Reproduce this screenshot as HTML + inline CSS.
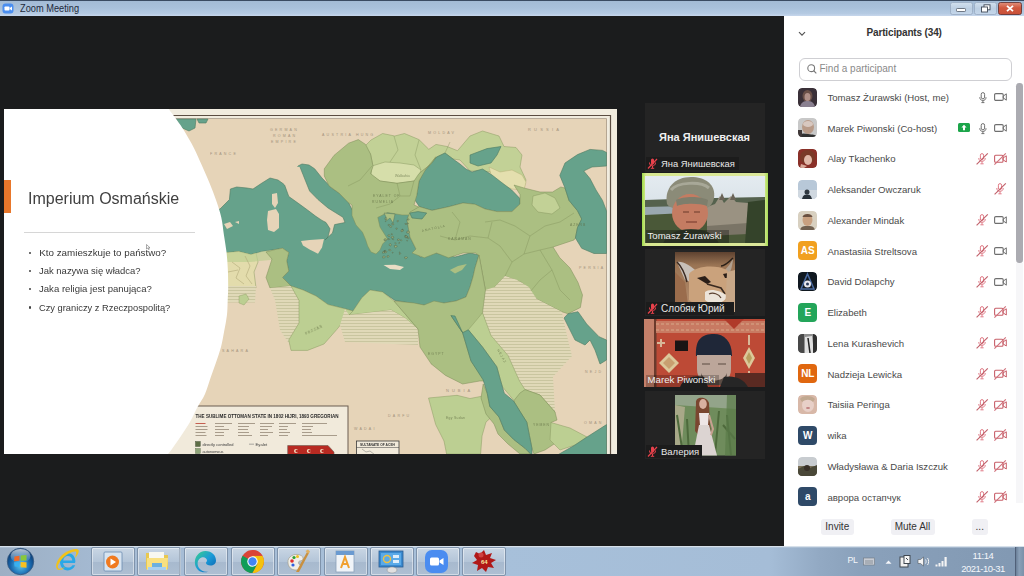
<!DOCTYPE html>
<html><head><meta charset="utf-8"><title>Zoom Meeting</title>
<style>
*{margin:0;padding:0;box-sizing:border-box}
html,body{width:1024px;height:576px;overflow:hidden;background:#1b1c1d;font-family:"Liberation Sans",sans-serif;position:relative}
.a{position:absolute}
#tb{left:0;top:0;width:1024px;height:16px;background:linear-gradient(#3a4b62 0,#3a4b62 1px,#a3bbd5 1px,#a9c1db 8px,#b6cbe3 14px,#c3d4ea 15px,#c3d4ea 16px)}
#tt{left:19.5px;top:2px;font-size:11px;color:#1e2a3a;line-height:13px;transform:scaleX(.84);transform-origin:0 0}
#main{left:0;top:16px;width:784px;height:530px;background:#1b1c1d}
#panel{left:784px;top:16px;width:240px;height:530px;background:#fff}
#task{left:0;top:546px;width:1024px;height:30px;background:linear-gradient(90deg,#9cafc4 0,#a6bcd5 120px,#a7c0da 500px,#a5bdd7 770px,#92a9c3 820px,#8aa1bb 860px,#8299b3 1010px)}
.bl{left:39.3px;font-size:9.8px;color:#383838;line-height:12px;white-space:nowrap}
.bl::before{content:"";position:absolute;left:-10.8px;top:4.6px;width:2.8px;height:2.8px;border-radius:50%;background:#404040}
.lab{height:13.5px;background:#1c1c1c}
.lab span{position:absolute;top:1px;font-size:10px;color:#e8e8e8;line-height:12px;white-space:nowrap}
.vt{font-size:10px;color:#f0f0f0;line-height:12px;white-space:nowrap}
.row{left:784px;width:240px;height:0}
.av{left:14.3px;top:-9.5px;width:19px;height:19px;border-radius:4px}
.ini{color:#fff;font-size:10px;font-weight:bold;text-align:center;line-height:19px}
.nm{left:43.4px;top:-5.2px;font-size:9.6px;color:#4a4a4a;line-height:12px;white-space:nowrap}
.btn{top:519px;height:15.5px;border-radius:3px;background:#f0f0f4;font-size:10px;color:#333;text-align:center;line-height:15px}
.tbtn{top:547px;width:44px;height:28.5px;border:1px solid #7f93ab;border-radius:2px;background:linear-gradient(#c9d6e4,#b4c5d8 50%,#a7b9ce 51%,#aebfd2);box-shadow:inset 0 0 0 1px rgba(255,255,255,.45)}
</style></head><body>
<div id="tb" class="a"></div>
<svg class="a" style="left:2px;top:3px" width="12" height="11" viewBox="0 0 12 11"><rect x="0.5" y="0.5" width="11" height="10" rx="3" fill="#4a8ef0"/><rect x="2.5" y="3.5" width="5" height="4" rx="0.8" fill="#fff"/><path d="M7.8 5L10 3.6V7.4L7.8 6Z" fill="#fff"/></svg>
<div id="tt" class="a">Zoom Meeting</div>
<svg class="a" style="left:950px;top:2px" width="72" height="13" viewBox="0 0 72 13">
<defs><linearGradient id="wb" x1="0" y1="0" x2="0" y2="1"><stop offset="0" stop-color="#d2e0ee"/><stop offset=".5" stop-color="#bccfe3"/><stop offset="1" stop-color="#c4d6ea"/></linearGradient>
<linearGradient id="cb" x1="0" y1="0" x2="0" y2="1"><stop offset="0" stop-color="#e0907c"/><stop offset=".45" stop-color="#d0583e"/><stop offset="1" stop-color="#c8503a"/></linearGradient></defs>
<rect x="0.5" y="0.5" width="22" height="12" rx="2" fill="url(#wb)" stroke="#98aac0" stroke-width="0.8"/>
<rect x="6.5" y="6.5" width="9" height="3" rx="0.8" fill="#fff" stroke="#505a68" stroke-width="0.8"/>
<rect x="24.5" y="0.5" width="22" height="12" rx="2" fill="url(#wb)" stroke="#98aac0" stroke-width="0.8"/>
<rect x="34" y="2.8" width="6" height="5" fill="#fff" stroke="#404a58" stroke-width="0.9"/><rect x="31.5" y="5" width="6" height="5" fill="#fff" stroke="#404a58" stroke-width="0.9"/>
<rect x="48.5" y="0.5" width="23" height="12" rx="2" fill="url(#cb)" stroke="#5a2a28" stroke-width="0.8"/>
<path d="M57 3.8L63 9.2M63 3.8L57 9.2" stroke="#fff" stroke-width="1.8"/>
</svg>
<div id="main" class="a"></div>
<svg class="a" style="left:4px;top:109px" width="613" height="345" viewBox="4 109 613 345">
<defs>
<pattern id="hat" width="4" height="3" patternUnits="userSpaceOnUse"><rect width="4" height="3" fill="#e0d9b8"/><rect y="2" width="4" height="1" fill="#c9c59f"/></pattern>
<linearGradient id="wg" x1="0" x2="1"><stop offset="0" stop-color="#fff"/><stop offset="0.9" stop-color="#fff"/><stop offset="1" stop-color="#fbfbfb"/></linearGradient>
</defs>
<rect x="4" y="109" width="613" height="345" fill="#f1ecdf"/>
<rect x="160" y="119" width="447" height="335" fill="#e6d4b8"/>
<path d="M160 115.5H610.5V454" fill="none" stroke="#5b4d42" stroke-width="1.2"/>
<path d="M160 118.5H606.5V454" fill="none" stroke="#a89a88" stroke-width="0.8"/>
<!-- atlantic bits -->
<path d="M176 119H196L195 128L189 131L180 127Z M197 119H208L206 123L199 123Z" fill="#66a28b" stroke="#4e7a62" stroke-width="0.6"/>
<!-- Mediterranean -->
<path d="M190 218L220 209L229.4 199.6L230.4 189L236.7 187L247 188L253 189L262 183L270 178L278 180L285 185L292 175L298 166L302 164L309 165L314.6 168.75L322 178L331.6 188L339 193L348.6 202.8L353.5 212.5L376 211L395 212L410 212L407 220L410 237L416 249L420 257L435 253L445 255L455 257L470 253L479 255L475 268L473 277L470 287L466 297L456 301L444 303L424 305L407.5 302.5L395 300.4L382.5 292L370 290L361.7 298L353 311L345 308.75L328 304.6L316 296L303 290L291 286L282.5 277.5L288.75 271L286.7 260.8L288.75 252.5L282.5 248.3L276 249.4L261.7 251.5L251 254.6L238.75 251.5L228 252.5L190 255Z" fill="#66a28b" stroke="#4e7a62" stroke-width="0.6"/>
<!-- Italy -->
<path d="M278 172L284.6 185L288.8 196.5L299 203.8L307.5 210L315.8 216.3L322 220.4L326 222.5L330 228.8L328 237L325 240L332.5 233L334.6 224.6L345 222.5L343 217.3L328 208L318 199.6L309.6 191L303 174.6L300 167L292 166Z" fill="#e6d4b8"/>
<path d="M284.6 185L288.8 196.5L299 203.8L307.5 210L315.8 216.3L322 220.4L326 222.5L330 228.8L328 237L325 240L332.5 233L334.6 224.6L345 222.5L343 217.3L328 208L318 199.6L309.6 191L303 174.6L300 167" fill="none" stroke="#4e7a62" stroke-width="0.6"/>
<path d="M301 241L309.6 240L324 239L322 247.5L318 253.8L309.6 249.6L303 245.4Z" fill="#e6d4b8"/>
<path d="M268 211L276 209L279 214L279 228L274 232L268 230L267 220Z M272 194L277 193L278 203L275 208L272 204Z M224 224L230 222L233 226L227 229Z M235 222L239 221L239 224Z" fill="#e6d4b8"/>
<!-- Balkans light green (autonomous) -->
<path d="M365 146L371 140L382.6 133.5L394.8 136L404.5 133.5L419 139.6L428.8 149.3L436 144.4L447 146.5L457.5 150.7L470 136L482.5 131L499 136L504 146.5L516 147.5L522 155L520 167L526 180L524 188L514 185L500 180L490 172L480 171L470 171L460 160L453 159L445 153L437 157L431 164L419 173.6L414 181L397 183.3L380 181L370.5 173.6L373 166L370.5 154Z" fill="#c2d196" stroke="#8a9a62" stroke-width="0.5"/>
<!-- Wallachia pale -->
<path d="M372 166L385 162L400 163L414 165L421 170L419 177L414 181L397 183.3L380 181L371 175Z" fill="#d6deaa" stroke="#8a9a62" stroke-width="0.5"/>
<!-- Crimea / Circassia pale yellow -->
<path d="M489 167L500 172L512 170L522 175L526 182L524 190L512 189L500 184L492 178Z" fill="#e4dfae" stroke="#b0a870" stroke-width="0.4"/>
<!-- Black Sea -->
<path d="M436.7 157L445 153L453 159L460 164L466 169L472 172L482.5 169L492 175L501 182L511.7 190L520 198.6L520 204L512 211.6L497 211.6L485 209L475 204.3L463 203L449 206.7L432 210.4L419.4 206.7L414.6 199.4L416.7 195.5L419 181L424 171.5L430 165Z" fill="#66a28b" stroke="#4e7a62" stroke-width="0.6"/>
<!-- Azov -->
<path d="M470 155L487 148.6L501 146.5L497 155L491 163L478 166L470 163Z" fill="#66a28b" stroke="#4e7a62" stroke-width="0.6"/>
<!-- Balkans mid green (directly controlled) -->
<path d="M324.3 168.8L334 155.4L348.6 143.2L358.3 139.6L365.6 144.4L370.5 154L373 166.3L370.5 173.6L380 181L397 183.3L414 181L419 173.6L431 164L436 156.6L426 168.8L419 181L416.7 195.5L414 205L426.4 210L431 212.5L416.7 215L402 215L387.5 212.5L377.8 217.4L380 227L387.5 239L382.6 244L380 250L376 254L371 252L367.7 246L365.6 239.6L362.5 232.3L356 225L352 215.6L352 205L348.6 202.8L339 193L329 185.8L324.3 176Z" fill="#abbf82" stroke="#7d8d58" stroke-width="0.5"/>
<!-- Anatolia + Middle East mid green -->
<path d="M410 212L419.4 206.7L432 210.4L449 206.7L463 203L475 204.3L485 209L497 211.6L512 211.6L520 204L520 194.6L514 185L524 188L540 192L552.5 192L560.8 187L565 188L569 200.4L577.5 210.8L581.7 219L577.5 227.5L575.4 238L574 240L553 247L559.6 257.5L570 268L578 282.5L582.5 295L580.4 307.5L568 313.75L561.7 311.7L536.7 299L522 282.5L505 276L494.8 287L487.5 301.5L483.9 320L485.4 290L479 255.4L475.4 253L463 253L448.6 257.8L436.5 253L424.3 257.8L412 253L416 249L410 237L407 220Z" fill="#abbf82" stroke="#7d8d58" stroke-width="0.5"/>
<path d="M409.7 213L418 211.6L426.7 213L422 219L412 218Z" fill="#66a28b" stroke="#4e7a62" stroke-width="0.6"/>
<path d="M389.7 239.4L389.0 239.7L387.9 239.6L387.5 238.8L389.0 238.4ZM396.3 243.3L395.6 243.9L394.9 243.4L394.8 242.8L395.4 242.8ZM407.8 236.7L406.3 237.4L405.0 236.8L405.1 235.3L406.3 235.6ZM389.0 256.6L388.4 257.3L387.2 257.2L387.0 255.9L388.7 255.6ZM407.6 257.4L406.0 259.0L404.7 258.3L404.5 257.0L406.4 256.8ZM385.8 251.6L384.2 253.0L382.3 253.1L383.0 251.3L384.2 251.2ZM403.6 230.9L402.1 231.7L401.0 231.6L401.0 230.2L402.6 229.3ZM388.4 218.6L386.5 219.9L385.1 219.5L385.1 217.9L387.0 217.5ZM409.2 237.9L408.9 238.8L407.4 238.3L407.4 237.5L408.6 237.3ZM399.9 243.0L399.4 243.4L398.6 243.2L398.8 242.8L399.6 242.3ZM390.1 235.6L389.5 236.5L388.1 236.2L387.8 235.1L389.1 234.7ZM403.2 229.8L403.0 230.3L402.1 229.9L402.0 229.4L403.0 229.2ZM407.2 224.0L406.2 224.5L405.3 224.5L404.9 223.5L406.3 223.4ZM390.9 250.3L390.4 250.9L388.8 250.5L388.7 249.6L390.1 249.2ZM408.5 223.6L407.8 223.8L407.1 223.6L407.2 223.2L408.1 222.9ZM397.2 228.8L396.7 229.5L396.0 229.1L395.8 228.2L397.2 228.0ZM407.6 240.7L407.5 241.1L406.7 240.9L406.8 240.3L407.3 240.3ZM407.3 236.5L406.6 237.9L404.9 237.6L405.0 235.5L406.6 235.9ZM400.1 252.3L399.8 252.8L399.0 252.7L399.2 252.3L399.6 252.0ZM385.4 256.7L384.5 257.9L382.6 257.9L382.8 256.3L384.1 255.9ZM386.4 239.7L386.1 240.7L384.1 240.5L384.0 239.1L386.0 238.8ZM394.0 237.3L392.8 238.2L391.1 238.1L391.2 237.0L392.9 236.0ZM409.5 232.5L408.6 233.2L406.6 233.0L407.0 231.2L409.0 231.0ZM398.7 221.0L397.9 221.9L397.2 221.8L397.2 220.7L397.8 220.0ZM387.1 251.9L385.8 252.9L384.4 252.6L384.1 250.9L385.5 250.3ZM409.3 219.5L408.5 220.0L407.4 220.1L407.6 219.0L408.4 218.8ZM392.7 234.1L392.1 234.7L391.3 234.6L391.3 233.7L392.0 233.6ZM400.9 253.6L400.1 254.4L399.3 254.2L399.4 253.6L400.1 253.2ZM391.9 226.8L391.1 227.5L389.5 227.0L389.9 226.1L390.9 225.5ZM393.9 224.0L393.4 225.0L391.9 224.6L391.7 223.5L393.2 223.3ZM397.3 246.5L395.5 247.8L394.6 247.3L394.2 245.6L396.6 245.3ZM389.8 224.6L388.9 225.7L388.0 225.4L388.1 224.5L389.0 224.3ZM385.5 251.1L384.7 251.6L384.0 251.6L384.0 250.9L385.0 250.3ZM393.7 239.2L393.4 239.9L392.5 239.5L392.5 238.9L393.3 238.7ZM391.3 244.9L390.6 246.1L389.1 245.3L389.1 244.3L390.6 243.5ZM401.8 240.3L401.5 240.9L400.5 240.5L400.6 239.9L401.2 239.5ZM399.9 239.7L399.2 240.4L397.4 240.3L397.5 239.0L399.0 238.9ZM393.2 252.8L392.8 253.2L392.3 253.1L392.1 252.4L392.9 252.2Z" fill="#9fb07a" stroke="#4f6a52" stroke-width="0.5"/>
<path d="M384 213L387 219L385 222L390 218L393 223L395 214Z" fill="#abbf82" stroke="#4f6a52" stroke-width="0.4"/>
<path d="M533 196L545 193L555 198L560 208L552 214L538 212L532 205Z" fill="#c2d196" stroke="#7d8d58" stroke-width="0.4"/>
<g fill="none" stroke="#7d8d58" stroke-width="0.45" opacity=".8">
<path d="M505 276L512 262L524 254L540 250L553 247"/>
<path d="M512 262L500 246L488 238L470 236L455 240L440 236"/>
<path d="M524 254L530 236L545 226L560 222L574 213"/>
<path d="M530 236L515 226L500 220L485 222"/>
<path d="M540 250L552 270L560 290L570 300"/>
<path d="M552 270L540 280L530 292"/>
<path d="M455 240L460 222L452 212"/>
<path d="M488 238L492 222"/>
<path d="M372 166L360 180L348 186"/>
<path d="M397 183L400 196L390 204L376 208"/>
<path d="M414 181L410 196L400 196"/>
<path d="M394 136L398 150L390 162"/>
<path d="M419 140L415 155L421 170"/>
<path d="M445 153L450 142"/>
<path d="M431 364L455 362L478 368"/>
<path d="M457 395L460 420L470 440"/>
<path d="M520 395L532 410L545 418"/>
</g>
<!-- Cyprus, Crete -->
<path d="M449.8 270L458 266L466.8 263.9L462 270L455 273.6Z" fill="#abbf82"/>
<path d="M383.5 265L395 264.8L404 267L400 270L390 269Z" fill="#e9ddc4"/>
<!-- Caspian -->
<path d="M565 163L577.5 154.6L590 149.4L602.5 150.4L606.5 152.5L606.5 166L592 167L583.75 171L590 178.5L596 190L602.5 200.4L606.5 211L606.5 253.5L594 253.5L581.7 248.3L575.4 238L577.5 227.5L581.7 219L577.5 210.8L569 200.4L565 188L559.8 175.4Z" fill="#66a28b" stroke="#4e7a62" stroke-width="0.6"/>
<!-- Persian Gulf -->
<path d="M564 318L568 313.75L578 311.7L586.7 324L599 336.7L606.5 340L606.5 360L600 364L595 350L590 340L585 345L575 340Z" fill="#66a28b" stroke="#4e7a62" stroke-width="0.6"/>
<!-- Arabian hatched desert -->
<path d="M505 276L516.7 279.7L528.8 287L536.7 299L561.7 311.7L568 340L572 356L553 376.7L555 412L540 395L525 389.6L519.5 381L508 355.5L491 335.5L482.5 312.8L485.4 290L494.8 287Z" fill="url(#hat)"/>
<!-- North Africa -->
<path d="M190 255L228 252.5L238.75 251.5L251 254.6L256 253L258 262L254 272L256 288L190 288Z" fill="#e3dcac" stroke="#8a9a62" stroke-width="0.5"/>
<path d="M190 252L228 252.5L238.75 251.5L251 254.6L261.7 251.5L276 249.4L282.5 248.3L288.75 252.5L286.7 260.8L270 260L250 262L228 262L190 262Z" fill="#bccf92" opacity=".7"/>
<path d="M266 252L276 249.4L282.5 248.3L288.75 252.5L286.7 260.8L288.75 271L282.5 277.5L291 286L270 288L266 277.5L272 259Z" fill="#abbf82" stroke="#7d8d58" stroke-width="0.5"/>
<path d="M190 286L256 286L255 302.5L190 302.5Z" fill="url(#hat)"/>
<g fill="none" stroke="#a8a070" stroke-width="0.5"><path d="M232 262L240 268L236 278L244 284"/><path d="M245 256L250 266L246 276L252 284"/><path d="M228 272L238 270"/></g>
<path d="M270 288L291 286L299 300L299 323L288.75 340L290 345L280 330L275 300Z" fill="url(#hat)"/>
<path d="M239 296L246 294L249 299L244 305L239 303Z" fill="#bccf92" stroke="#8a9a62" stroke-width="0.4"/>
<path d="M291 286L303 290L316 296L328 304.6L345 308.75L353 311L347 317L336.7 329.6L324 344L307.5 350.4L291 350.4L288.75 340L299 323L299 300.4Z" fill="#bccf92" stroke="#8a9a62" stroke-width="0.5"/>
<path d="M353 311L361.7 298L370 290L382.5 292L394 301L418 329L405 318L391 310L366 313L349 315Z" fill="#bccf92" stroke="#8a9a62" stroke-width="0.5"/>
<path d="M345 309L349 315L366 313L391 310L405 318L418 329L418 345L345 342L340 325Z" fill="url(#hat)"/>
<!-- Egypt -->
<path d="M394 301L414 303L424 305L434 301L444 303L456 301L466 297L470 287L473 277L475 268L479 255L485.4 290L482.5 312.8L478 329.8L462.6 332.7L451 315.6L462.6 332.7L471 361L485.4 381L479.7 381L462.6 384L445.5 375.4L431.3 364L420 347L418 329Z" fill="#abbf82" stroke="#7d8d58" stroke-width="0.5"/>
<!-- Hejaz light -->
<path d="M468.3 329.8L482.5 312.8L491 335.5L508 355.5L519.5 381L525 389.6L540 395L555 412L551 422.5L540 423L525 423.75L516.7 403.8L502.4 386.8L496.8 366.8L482.5 347Z" fill="#bccf92" stroke="#8a9a62" stroke-width="0.5"/>
<!-- Yemen mid -->
<path d="M513.6 401L520 393L525 389.6L540 395L555 412L557 420L551 422.5L560 440L545 450L534 454L532 448.6L529.4 435.4L526.8 422.2L520.2 411.7Z" fill="#abbf82" stroke="#7d8d58" stroke-width="0.5"/>
<!-- Aden light -->
<path d="M551 422.5L570 428L587 437L575 445L560 450L550 440Z" fill="#bccf92" stroke="#8a9a62" stroke-width="0.5"/>
<!-- Arabian sea -->
<path d="M557.5 455L575 445L587 437L606.5 424.6L606.5 455Z" fill="#66a28b" stroke="#4e7a62" stroke-width="0.6"/>
<!-- Sudan light -->
<path d="M428.5 398L457 395.3L470 398.5L483 396L495 414L486 422L482 436L480.6 454L446.6 454L444 441L435.7 424.6Z" fill="#bccf92" stroke="#8a9a62" stroke-width="0.5"/>
<!-- Eritrea strip -->
<path d="M483.2 384L487.2 393.2L489.8 406.4L499 417L504.3 430L513.6 439.4L525.4 448.6L530.7 454L520 454L508 444L498 434L494 424L486 414L481 398Z" fill="#abbf82" stroke="#7d8d58" stroke-width="0.5"/>
<!-- Red Sea -->
<path d="M451 315.6L455 316L462.6 332.7L468.3 329.8L482.5 347L496.8 366.8L500.4 380L504.3 393.2L513.6 401L520.2 411.7L526.8 422.2L529.4 435.4L532 448.6L532 454L530.7 454L525.4 448.6L513.6 439.4L504.3 430L499 417L489.8 406.4L487.2 393.2L483.2 380L471 361L462.6 332.7Z" fill="#66a28b" stroke="#4e7a62" stroke-width="0.6"/>
<g font-family="Liberation Sans" font-size="3.6" fill="#8c7c6a" opacity=".75" letter-spacing="2.2">
<text x="270" y="131">GERMAN</text><text x="273" y="137">ROMAN</text><text x="271" y="143">EMPIRE</text>
<text x="210" y="154.5">FRANCE</text>
<text x="528" y="130.5" font-size="4" letter-spacing="3.2">RUSSIA</text>
<text x="322" y="135.5">AUSTRIA HUNG</text>
<text x="428" y="134">MOLDAV</text>
<text x="579" y="269">PERSIA</text>
<text x="222" y="352">SAHARA</text>
<text x="446" y="391.5" font-size="4" letter-spacing="3">NUBIA</text>
<text x="388" y="416.5">DARFU</text>
<text x="354" y="430">WADAI</text>
<text x="585" y="373">NEJD</text>
<text x="584" y="424">OMAN</text>
</g>
<g font-family="Liberation Sans" font-size="3.4" fill="#5e6a42" opacity=".7" letter-spacing="1">
<text x="422" y="232" transform="rotate(-12 422 232)">ANATOLIA</text>
<text x="448" y="240">KARAMAN</text>
<text x="373" y="197">EYALET OF</text><text x="372" y="203">RUMELIA</text>
<text x="395" y="177" font-style="italic" letter-spacing="0">Wallachia</text>
<text x="428" y="355">EGYPT</text>
<text x="497" y="350" transform="rotate(60 497 350)">HEJAZ</text>
<text x="306" y="335" transform="rotate(-25 306 335)">FEZZAN</text>
<text x="533" y="426">YEMEN</text>
<text x="446" y="419" letter-spacing="0.3">Egy Sudan</text>
<text x="570" y="226">AZERB</text>
</g>
<!-- legend -->
<rect x="150" y="406" width="198" height="50" fill="#f1eadb" stroke="#6b5d50" stroke-width="1"/>
<text x="195.5" y="418" font-family="Liberation Sans" font-weight="bold" font-size="5.4" fill="#2a2a2a" textLength="143" lengthAdjust="spacingAndGlyphs">THE SUBLIME OTTOMAN STATE IN 1802 HIJRI, 1893 GREGORIAN</text>
<g fill="#a09482">
<rect x="195.5" y="423" width="10" height="0.9" fill="#c05040"/><rect x="195.5" y="426" width="12" height="0.9"/><rect x="195.5" y="429" width="12" height="0.9"/><rect x="195.5" y="432" width="10" height="0.9"/><rect x="195.5" y="435" width="11" height="0.9"/>
<rect x="215" y="423" width="17" height="0.9"/><rect x="215" y="426" width="9" height="0.9"/><rect x="215" y="429" width="14" height="0.9"/><rect x="215" y="432" width="9" height="0.9"/><rect x="215" y="435" width="9" height="0.9"/>
<rect x="238" y="423" width="17" height="0.9"/><rect x="238" y="426" width="11" height="0.9"/><rect x="238" y="429" width="10" height="0.9"/><rect x="238" y="432" width="11" height="0.9"/><rect x="238" y="435" width="14" height="0.9"/>
<rect x="260" y="423" width="14" height="0.9"/><rect x="260" y="426" width="12" height="0.9"/><rect x="260" y="429" width="8" height="0.9"/><rect x="260" y="432" width="13" height="0.9"/><rect x="260" y="435" width="8" height="0.9"/>
<rect x="279" y="423" width="17" height="0.9"/><rect x="279" y="426" width="9" height="0.9"/><rect x="279" y="429" width="8" height="0.9"/><rect x="279" y="432" width="11" height="0.9"/><rect x="279" y="435" width="9" height="0.9"/>
<rect x="302" y="423" width="25" height="0.9"/><rect x="302" y="426" width="11" height="0.9"/><rect x="302" y="429" width="9" height="0.9"/><rect x="302" y="432" width="10" height="0.9"/><rect x="302" y="435" width="35" height="0.9"/>
</g>
<rect x="195.5" y="441.5" width="4.8" height="5" fill="#5d6e45" stroke="#3a4530" stroke-width="0.4"/><text x="202.5" y="446" font-family="Liberation Sans" font-size="4.4" fill="#3a3a3a" textLength="31" lengthAdjust="spacingAndGlyphs">directly controlled</text>
<rect x="195.5" y="448.5" width="4.8" height="5" fill="#8fa57a" stroke="#5a6a4a" stroke-width="0.4"/><text x="202.5" y="452.5" font-family="Liberation Sans" font-size="4.4" fill="#3a3a3a" textLength="21" lengthAdjust="spacingAndGlyphs">autonomous</text>
<rect x="249" y="443.8" width="5" height="0.6" fill="#777"/><text x="255.6" y="445.8" font-family="Liberation Sans" font-size="4.4" fill="#3a3a3a" textLength="11.5" lengthAdjust="spacingAndGlyphs">Eyalet</text>
<path d="M287.7 455V445.5H328L334 452V455Z" fill="#b82a22" stroke="#6b5d50" stroke-width="0.6"/>
<g fill="#f2dcc0"><circle cx="296" cy="451" r="2"/><circle cx="308.8" cy="451" r="2"/><circle cx="322" cy="451" r="2"/></g>
<g fill="#b82a22"><circle cx="296.8" cy="451" r="1.3"/><circle cx="309.6" cy="451" r="1.3"/><circle cx="322.8" cy="451" r="1.3"/></g>
<rect x="356.5" y="441" width="42.5" height="15" fill="#f1eadb" stroke="#3a3a3a" stroke-width="0.8"/>
<path d="M356.5 447.5H399" stroke="#3a3a3a" stroke-width="0.5"/>
<text x="360" y="445.6" font-family="Liberation Sans" font-weight="bold" font-size="3.8" fill="#333" textLength="35" lengthAdjust="spacingAndGlyphs">SULTANATE OF ACEH</text>
<path d="M362 449L366 452L370 451L375 455" fill="none" stroke="#555" stroke-width="0.4"/>
<!-- white overlay -->
<path d="M4 109H168.7C170.0 110.8 173.9 115.8 176.5 119.5C179.1 123.2 181.4 126.2 184.3 131.0C187.2 135.8 191.0 142.3 193.9 148.0C196.8 153.7 199.1 159.2 201.7 165.0C204.3 170.8 207.1 177.2 209.5 183.0C211.9 188.8 214.0 194.3 216.0 200.0C218.0 205.7 219.9 211.2 221.2 217.0C222.6 222.8 223.0 228.9 223.9 234.7C224.8 240.5 225.8 246.3 226.5 252.0C227.2 257.7 227.5 263.2 227.8 269.0C228.1 274.8 228.2 281.8 228.2 287.0C228.2 292.2 227.9 295.2 227.7 300.0C227.5 304.8 227.5 310.4 226.9 315.6C226.3 320.8 225.2 325.8 224.2 331.0C223.2 336.2 222.4 341.8 221.0 347.0C219.6 352.2 217.8 357.3 216.0 362.5C214.2 367.7 212.3 372.8 210.5 378.0C208.7 383.2 207.2 389.0 205.0 394.0C202.8 399.0 199.5 403.3 197.0 408.0C194.5 412.7 192.7 417.3 190.0 422.0C187.3 426.7 184.0 431.5 181.0 436.0C178.0 440.5 174.2 446.0 172.0 449.0C169.8 452.0 168.7 453.2 168.0 454.0H4Z" fill="#fff"/>
</svg>
<!-- slide text -->
<div class="a" style="left:4px;top:180px;width:6.5px;height:33px;background:#e8772b"></div>
<div class="a" id="st" style="left:28px;top:188.5px;font-size:16px;color:#404040;white-space:nowrap;line-height:20px">Imperium Osmańskie</div>
<div class="a" style="left:24px;top:231.5px;width:171px;height:1px;background:#d6d6d6"></div>
<div class="a bl" style="top:247px">Kto zamieszkuje to państwo?</div>
<div class="a bl" style="top:265px"><span style="display:inline-block;transform:scaleX(.966);transform-origin:0 0">Jak nazywa się władca?</span></div>
<div class="a bl" style="top:283px"><span style="display:inline-block;transform:scaleX(.977);transform-origin:0 0">Jaka religia jest panująca?</span></div>
<div class="a bl" style="top:301.5px"><span style="display:inline-block;transform:scaleX(.949);transform-origin:0 0">Czy graniczy z Rzeczpospolitą?</span></div>
<svg class="a" style="left:146px;top:244px" width="6" height="6" viewBox="0 0 6 6"><path d="M0.5 0.5V5L1.6 4L2.6 5.6L3.2 5.3L2.4 3.8H4Z" fill="#fff" stroke="#555" stroke-width="0.5"/></svg>
<!-- video column -->
<div class="a" style="left:644.5px;top:103px;width:120px;height:69px;background:#242424"></div>
<div class="a" style="left:644.5px;top:130px;width:120px;text-align:center;font-size:11px;font-weight:bold;color:#f0f0f0;line-height:14px">Яна Янишевская</div>
<div class="a lab" style="left:645.5px;top:156.5px;width:93px"><svg class="a" style="left:1px;top:1.5px" width="11" height="11" viewBox="0 0 11 11"><rect x="4" y="0.5" width="3" height="6" rx="1.5" fill="#e8414b"/><path d="M2.5 4.5C2.5 7 4 7.8 5.5 7.8S8.5 7 8.5 4.5" fill="none" stroke="#e8414b" stroke-width="1"/><path d="M5.5 7.8V10M3.8 10.3H7.2" stroke="#e8414b" stroke-width="1"/><path d="M1 10.5L10 1" stroke="#e8414b" stroke-width="1.2"/></svg><span style="left:15.5px;font-size:9.4px">Яна Янишевская</span></div>

<div class="a" style="left:641.5px;top:172.5px;width:126.5px;height:73.5px;background:linear-gradient(90deg,#9fdc4a 0,#d8e890 4px,#dbe79a 122px,#9fdc4a 126.5px)"></div>
<svg class="a" style="left:644.5px;top:175.5px" width="120" height="67.5" viewBox="0 0 120 67.5">
<defs><linearGradient id="sky" x1="0" y1="0" x2="0" y2="1"><stop offset="0" stop-color="#e4ebf0"/><stop offset="1" stop-color="#cdd8df"/></linearGradient></defs>
<rect width="120" height="67.5" fill="url(#sky)"/>
<path d="M0 24L30 23L70 22L120 21V30L0 33Z" fill="#55624e"/>
<path d="M0 31L40 30V38L0 40Z" fill="#9aa8b0"/>
<path d="M0 39L40 37L120 33V67.5H0Z" fill="#4a5838"/>
<path d="M62 58L62 31L70 28L75 20L79 27L86 20L91 26L103 27L103 55Z" fill="#9a9282"/><path d="M62 50L103 47V58L62 60Z" fill="#7a7466"/>
<path d="M74 24L77 17L80 24Z M85 24L88 17L91 24Z" fill="#6a6458"/>
<path d="M103 26L120 24V67.5H100Z" fill="#34432a"/>
<path d="M22 28C19 12 30 1 46 1C60 1 71 8 69 22C68 28 64 31 62 32H28C25 31 23 30 22 28Z" fill="#8b8b78"/>
<path d="M26 14C32 6 56 5 64 12" stroke="#a8a898" stroke-width="3" fill="none"/>
<ellipse cx="45" cy="37" rx="18" ry="19" fill="#c47c62"/>
<path d="M31 24C38 20 56 20 63 24L62 30C55 27 38 27 32 30Z" fill="#7e7e6c"/>
<path d="M38 36H44M49 36H55" stroke="#6a3a2a" stroke-width="1"/>
<path d="M41 46H52" stroke="#8a4a3a" stroke-width="1.4"/>
<path d="M18 67.5C22 58 32 53 46 53S70 58 74 67.5Z" fill="#3a4230"/>
<rect x="1" y="54" width="83" height="13" fill="#000" fill-opacity="0.3"/>
</svg>
<div class="a vt" style="left:647.5px;top:229.5px;font-size:9.6px">Tomasz Żurawski</div>

<div class="a" style="left:644.5px;top:248.5px;width:120px;height:67.5px;background:#242424"></div>
<svg class="a" style="left:675px;top:251.5px" width="60" height="60" viewBox="0 0 60 60">
<defs><linearGradient id="cg" x1="0" y1="0" x2="0" y2="1"><stop offset="0" stop-color="#5e4230"/><stop offset=".22" stop-color="#9a7454"/><stop offset="1" stop-color="#b89070"/></linearGradient></defs>
<rect width="60" height="60" fill="url(#cg)"/>
<path d="M0 20L0 60H14L10 30Z" fill="#9a6c4c"/>
<path d="M2 10C8 9 16 14 22 20L16 30L10 28Z" fill="#c8c0b8"/>
<path d="M2 10C6 14 10 22 12 30" stroke="#3a2a22" stroke-width="1.5" fill="none"/>
<path d="M58 6C56 12 50 18 46 22L52 26C56 20 58 12 58 6Z" fill="#b0a090"/>
<path d="M58 6C54 10 50 14 46 14" stroke="#2a2018" stroke-width="1.5" fill="none"/>
<path d="M14 22C20 14 40 12 52 18C58 26 58 42 52 52C40 58 24 56 14 48Z" fill="#caa27c"/>
<path d="M22 26L30 24L36 30L32 32Z" fill="#2a1e18"/>
<path d="M48 22L53 21L54 26L50 26Z" fill="#2a1e18"/>
<path d="M32 32L46 36L50 42" stroke="#3a2a20" stroke-width="1.6" fill="none"/>
<path d="M30 40C34 36 46 38 52 44C50 52 36 54 30 48Z" fill="#ece4da"/>
<path d="M34 42C38 40 44 42 46 46" stroke="#5a4030" stroke-width="1.2" fill="none"/>
<path d="M52 20L60 18V60H50Z" fill="#c8a888"/>
</svg>
<div class="a lab" style="left:645.5px;top:301.5px;width:88.5px"><svg class="a" style="left:1px;top:1.5px" width="11" height="11" viewBox="0 0 11 11"><rect x="4" y="0.5" width="3" height="6" rx="1.5" fill="#e8414b"/><path d="M2.5 4.5C2.5 7 4 7.8 5.5 7.8S8.5 7 8.5 4.5" fill="none" stroke="#e8414b" stroke-width="1"/><path d="M5.5 7.8V10M3.8 10.3H7.2" stroke="#e8414b" stroke-width="1"/><path d="M1 10.5L10 1" stroke="#e8414b" stroke-width="1.2"/></svg><span style="left:15.5px">Слобяк Юрий</span></div>

<svg class="a" style="left:644px;top:318.5px" width="121" height="68" viewBox="0 0 121 68">
<rect width="121" height="68" fill="#bd4a36"/>
<rect width="10" height="68" fill="#c4806a"/>
<rect x="10" y="0" width="2.5" height="68" fill="#6a3a2c"/>
<path d="M12 2H121V14H12Z" fill="#c87a62"/>
<path d="M12 5H121M12 11H121" stroke="#d8a888" stroke-width="1.2" stroke-dasharray="3 2"/>
<path d="M80 0L90 10L100 0Z" fill="#b03a2a"/>
<path d="M15 44L25 34L35 44L25 54Z" fill="#dcc89a"/>
<path d="M19 44L25 38L31 44L25 50Z" fill="#c8a070"/>
<path d="M13 24H21M17 20V28" stroke="#d8b898" stroke-width="2"/>
<path d="M99 39L105 28L111 39L105 50Z" fill="#dcc89a"/>
<path d="M102 39L105 33L108 39L105 45Z" fill="#b8a060"/>
<path d="M105 16V26M105 52V60" stroke="#d8b898" stroke-width="2"/>
<rect x="91" y="54" width="30" height="14" fill="#5a2a22"/>
<rect x="31" y="21.5" width="13" height="10.5" fill="#1a1414"/>
<path d="M52 37C51 20 58 15 70 15C80 15 88 22 88 37Z" fill="#1f2738"/>
<path d="M53 36H87V50C87 60 80 66 70 66S53 60 53 50Z" fill="#bca69a"/>
<path d="M58 45H66M74 45H82" stroke="#5a4a40" stroke-width="1"/>
<path d="M57 54C60 64 80 64 83 54L82 66H58Z" fill="#5a4c44"/>
<path d="M36 68C40 58 52 56 60 58L64 68ZM76 68L80 58C90 56 100 60 104 68Z" fill="#262626"/>
<rect x="2" y="56" width="73" height="12" fill="#000" fill-opacity="0.22"/>
</svg>
<div class="a vt" style="left:647.5px;top:373.5px;font-size:9.7px">Marek Piwonski</div>

<div class="a" style="left:644.5px;top:391px;width:120px;height:67.5px;background:#242424"></div>
<svg class="a" style="left:674.5px;top:395px" width="61" height="60.5" viewBox="0 0 61 60.5">
<rect width="61" height="60.5" fill="#6f8c5c"/>
<path d="M0 0H61V14L0 10Z" fill="#93a48a"/>
<path d="M0 10L10 12L6 60.5H0Z" fill="#a8a888"/>
<path d="M2 20L8 60M12 24L14 60M44 16L40 60M52 20L56 60M48 30L60 44" stroke="#4e6a3c" stroke-width="2" fill="none"/>
<path d="M52 0H61V60.5H50Z" fill="#5a7a48" opacity=".7"/>
<path d="M21 8C20 1 32 1 34 8L35 30L38 48L28 46L20 36Z" fill="#7a4630"/>
<ellipse cx="28" cy="9" rx="3.8" ry="5" fill="#d8b0a0"/>
<path d="M24 18H34L33 30H25Z" fill="#eee6e6"/>
<path d="M24 30H34L42 60.5H18Z" fill="#dcd4d2"/>
<path d="M34 20L38 34L36 40" stroke="#c8a090" stroke-width="2" fill="none"/>
</svg>
<div class="a lab" style="left:645.5px;top:444.5px;width:56.5px"><svg class="a" style="left:1px;top:1.5px" width="11" height="11" viewBox="0 0 11 11"><rect x="4" y="0.5" width="3" height="6" rx="1.5" fill="#e8414b"/><path d="M2.5 4.5C2.5 7 4 7.8 5.5 7.8S8.5 7 8.5 4.5" fill="none" stroke="#e8414b" stroke-width="1"/><path d="M5.5 7.8V10M3.8 10.3H7.2" stroke="#e8414b" stroke-width="1"/><path d="M1 10.5L10 1" stroke="#e8414b" stroke-width="1.2"/></svg><span style="left:15.5px;font-size:9.5px">Валерия</span></div>
<div id="panel" class="a"></div>
<svg class="a" style="left:798px;top:31px" width="8" height="6" viewBox="0 0 8 6"><path d="M1 1.2L4 4.2L7 1.2" fill="none" stroke="#555" stroke-width="1.2"/></svg>
<div class="a" style="left:866.5px;top:26px;font-size:10px;font-weight:bold;color:#333;line-height:14px;letter-spacing:-0.15px">Participants (34)</div>
<div class="a" style="left:798.5px;top:57.5px;width:213.5px;height:23px;border:1px solid #cfcfd3;border-radius:6px;background:#fff"></div>
<svg class="a" style="left:807px;top:64px" width="10" height="10" viewBox="0 0 10 10"><circle cx="4.2" cy="4.2" r="3.4" fill="none" stroke="#777" stroke-width="1.1"/><path d="M6.7 6.7L9.3 9.3" stroke="#777" stroke-width="1.2"/></svg>
<div class="a" style="left:819.5px;top:62px;font-size:10px;color:#8a8a8a;line-height:13px">Find a participant</div>
<div class="a" style="left:1016.3px;top:82.5px;width:6.5px;height:180px;border-radius:3.2px;background:#ababb1"></div>
<div class="a" style="left:1016px;top:263px;width:7px;height:240px;background:#f6f6f8"></div>
<div class="a btn" style="left:821px;width:32.5px">Invite</div>
<div class="a btn" style="left:890.5px;width:44px">Mute All</div>
<div class="a btn" style="left:971.5px;width:16.5px">...</div>
<div class="a row" style="top:97.00px"><svg class="a av" width="19" height="19" viewBox="0 0 19 19"><defs><clipPath id="c0"><rect width="19" height="19" rx="4"/></clipPath></defs><g clip-path="url(#c0)"><rect width="19" height="19" fill="#3a3038"/><ellipse cx="9.5" cy="8" rx="5" ry="6" fill="#6a5048"/><ellipse cx="9.5" cy="9" rx="3" ry="4" fill="#b09088"/><path d="M2 19C3 14 6 13 9.5 13S16 14 17 19Z" fill="#8a8090"/></g></svg><div class="a nm">Tomasz Żurawski (Host, me)</div><svg class="a" style="left:194.5px;top:-5px" width="8" height="12" viewBox="0 0 8 12"><rect x="2.2" y="0.6" width="3.4" height="6.2" rx="1.7" fill="none" stroke="#6f6f6f" stroke-width="1"/><path d="M0.8 5.2C0.8 7.6 2.2 8.4 3.9 8.4S7 7.6 7 5.2" fill="none" stroke="#6f6f6f" stroke-width="1"/><path d="M3.9 8.4V10.2M2.4 10.6H5.4" stroke="#6f6f6f" stroke-width="1"/></svg><svg class="a" style="left:210px;top:-4px" width="13" height="8" viewBox="0 0 13 8"><rect x="0.6" y="0.6" width="8.6" height="6.8" rx="1.2" fill="none" stroke="#6f6f6f" stroke-width="1.1"/><path d="M9.2 3.2L12.3 0.8V7.2L9.2 4.8Z" fill="none" stroke="#6f6f6f" stroke-width="1"/></svg></div>
<div class="a row" style="top:127.75px"><svg class="a av" width="19" height="19" viewBox="0 0 19 19"><defs><clipPath id="c1"><rect width="19" height="19" rx="4"/></clipPath></defs><g clip-path="url(#c1)"><rect width="19" height="19" fill="#c8c8c8"/><ellipse cx="10" cy="9" rx="6" ry="7" fill="#b89a88"/><ellipse cx="10" cy="6" rx="5" ry="3" fill="#d8c8c0"/><path d="M0 19C2 15 5 15 10 16S17 16 19 19Z" fill="#303030"/><rect x="0" y="12" width="4" height="7" fill="#403838"/></g></svg><div class="a nm">Marek Piwonski (Co-host)</div><svg class="a" style="left:174px;top:-5px" width="12" height="9" viewBox="0 0 12 9"><rect width="12" height="9" rx="1.5" fill="#1ca54a"/><path d="M6 1.8L3.4 4.6H5V7.2H7V4.6H8.6Z" fill="#fff"/></svg><svg class="a" style="left:194.5px;top:-5px" width="8" height="12" viewBox="0 0 8 12"><rect x="2.2" y="0.6" width="3.4" height="6.2" rx="1.7" fill="none" stroke="#6f6f6f" stroke-width="1"/><path d="M0.8 5.2C0.8 7.6 2.2 8.4 3.9 8.4S7 7.6 7 5.2" fill="none" stroke="#6f6f6f" stroke-width="1"/><path d="M3.9 8.4V10.2M2.4 10.6H5.4" stroke="#6f6f6f" stroke-width="1"/></svg><svg class="a" style="left:210px;top:-4px" width="13" height="8" viewBox="0 0 13 8"><rect x="0.6" y="0.6" width="8.6" height="6.8" rx="1.2" fill="none" stroke="#6f6f6f" stroke-width="1.1"/><path d="M9.2 3.2L12.3 0.8V7.2L9.2 4.8Z" fill="none" stroke="#6f6f6f" stroke-width="1"/></svg></div>
<div class="a row" style="top:158.50px"><svg class="a av" width="19" height="19" viewBox="0 0 19 19"><defs><clipPath id="c2"><rect width="19" height="19" rx="4"/></clipPath></defs><g clip-path="url(#c2)"><rect width="19" height="19" fill="#8a3028"/><ellipse cx="9.5" cy="8" rx="7.5" ry="7" fill="#7a3a28"/><ellipse cx="10" cy="11" rx="4" ry="5" fill="#e0b8a8"/><path d="M3 15L9 17L6 19H2Z" fill="#d8a898"/></g></svg><div class="a nm">Alay Tkachenko</div><svg class="a" style="left:191.5px;top:-6px" width="13" height="12" viewBox="0 0 13 12"><rect x="4.4" y="0.6" width="3.2" height="6" rx="1.6" fill="none" stroke="#e07a86" stroke-width="1"/><path d="M2.8 5C2.8 7.4 4.2 8.2 6 8.2S9.2 7.4 9.2 5" fill="none" stroke="#e07a86" stroke-width="1"/><path d="M6 8.2V10.4M4.4 10.8H7.6" stroke="#e07a86" stroke-width="1"/><path d="M0.6 11.4L11.8 0.4" stroke="#c0606a" stroke-width="1.1"/></svg><svg class="a" style="left:209.5px;top:-6px" width="13" height="12" viewBox="0 0 13 12"><rect x="0.6" y="2.2" width="8.4" height="7" rx="1" fill="none" stroke="#c8606a" stroke-width="1.1"/><path d="M9 5L12.3 2.8V9L9 6.8Z" fill="none" stroke="#c8606a" stroke-width="1"/><path d="M0.4 11.6L11.8 0.4" stroke="#d0707a" stroke-width="1.1"/></svg></div>
<div class="a row" style="top:189.25px"><svg class="a av" width="19" height="19" viewBox="0 0 19 19"><defs><clipPath id="c3"><rect width="19" height="19" rx="4"/></clipPath></defs><g clip-path="url(#c3)"><rect width="19" height="19" fill="#b8c8d8"/><rect y="10" width="19" height="9" fill="#d0d8e0"/><ellipse cx="9" cy="12" rx="2.5" ry="2.5" fill="#303840"/><path d="M4 19C5 15 7 14.5 9 14.5S13 15 14 19Z" fill="#283038"/></g></svg><div class="a nm">Aleksander Owczaruk</div><svg class="a" style="left:210px;top:-6px" width="13" height="12" viewBox="0 0 13 12"><rect x="4.4" y="0.6" width="3.2" height="6" rx="1.6" fill="none" stroke="#e07a86" stroke-width="1"/><path d="M2.8 5C2.8 7.4 4.2 8.2 6 8.2S9.2 7.4 9.2 5" fill="none" stroke="#e07a86" stroke-width="1"/><path d="M6 8.2V10.4M4.4 10.8H7.6" stroke="#e07a86" stroke-width="1"/><path d="M0.6 11.4L11.8 0.4" stroke="#c0606a" stroke-width="1.1"/></svg></div>
<div class="a row" style="top:220.00px"><svg class="a av" width="19" height="19" viewBox="0 0 19 19"><defs><clipPath id="c4"><rect width="19" height="19" rx="4"/></clipPath></defs><g clip-path="url(#c4)"><rect width="19" height="19" fill="#d8d0c0"/><ellipse cx="9.5" cy="9" rx="5" ry="6" fill="#c8a080"/><path d="M4.5 6C5 2 14 2 14.5 6Z" fill="#6a5040"/><path d="M2 19C3 15 6 15 9.5 15S16 15 17 19Z" fill="#706050"/></g></svg><div class="a nm">Alexander Mindak</div><svg class="a" style="left:191.5px;top:-6px" width="13" height="12" viewBox="0 0 13 12"><rect x="4.4" y="0.6" width="3.2" height="6" rx="1.6" fill="none" stroke="#e07a86" stroke-width="1"/><path d="M2.8 5C2.8 7.4 4.2 8.2 6 8.2S9.2 7.4 9.2 5" fill="none" stroke="#e07a86" stroke-width="1"/><path d="M6 8.2V10.4M4.4 10.8H7.6" stroke="#e07a86" stroke-width="1"/><path d="M0.6 11.4L11.8 0.4" stroke="#c0606a" stroke-width="1.1"/></svg><svg class="a" style="left:210px;top:-4px" width="13" height="8" viewBox="0 0 13 8"><rect x="0.6" y="0.6" width="8.6" height="6.8" rx="1.2" fill="none" stroke="#6f6f6f" stroke-width="1.1"/><path d="M9.2 3.2L12.3 0.8V7.2L9.2 4.8Z" fill="none" stroke="#6f6f6f" stroke-width="1"/></svg></div>
<div class="a row" style="top:250.75px"><div class="a av ini" style="background:#f1a01f">AS</div><div class="a nm">Anastasiia Streltsova</div><svg class="a" style="left:191.5px;top:-6px" width="13" height="12" viewBox="0 0 13 12"><rect x="4.4" y="0.6" width="3.2" height="6" rx="1.6" fill="none" stroke="#e07a86" stroke-width="1"/><path d="M2.8 5C2.8 7.4 4.2 8.2 6 8.2S9.2 7.4 9.2 5" fill="none" stroke="#e07a86" stroke-width="1"/><path d="M6 8.2V10.4M4.4 10.8H7.6" stroke="#e07a86" stroke-width="1"/><path d="M0.6 11.4L11.8 0.4" stroke="#c0606a" stroke-width="1.1"/></svg><svg class="a" style="left:210px;top:-4px" width="13" height="8" viewBox="0 0 13 8"><rect x="0.6" y="0.6" width="8.6" height="6.8" rx="1.2" fill="none" stroke="#6f6f6f" stroke-width="1.1"/><path d="M9.2 3.2L12.3 0.8V7.2L9.2 4.8Z" fill="none" stroke="#6f6f6f" stroke-width="1"/></svg></div>
<div class="a row" style="top:281.50px"><svg class="a av" width="19" height="19" viewBox="0 0 19 19"><defs><clipPath id="c6"><rect width="19" height="19" rx="4"/></clipPath></defs><g clip-path="url(#c6)"><rect width="19" height="19" fill="#101820"/><path d="M9.5 2L16 17H3Z" fill="none" stroke="#4a6aa0" stroke-width="1.5"/><circle cx="9.5" cy="12" r="3.5" fill="#e8e8f0"/><circle cx="9.5" cy="12" r="1.5" fill="#2a3a5a"/></g></svg><div class="a nm">David Dolapchy</div><svg class="a" style="left:191.5px;top:-6px" width="13" height="12" viewBox="0 0 13 12"><rect x="4.4" y="0.6" width="3.2" height="6" rx="1.6" fill="none" stroke="#e07a86" stroke-width="1"/><path d="M2.8 5C2.8 7.4 4.2 8.2 6 8.2S9.2 7.4 9.2 5" fill="none" stroke="#e07a86" stroke-width="1"/><path d="M6 8.2V10.4M4.4 10.8H7.6" stroke="#e07a86" stroke-width="1"/><path d="M0.6 11.4L11.8 0.4" stroke="#c0606a" stroke-width="1.1"/></svg><svg class="a" style="left:210px;top:-4px" width="13" height="8" viewBox="0 0 13 8"><rect x="0.6" y="0.6" width="8.6" height="6.8" rx="1.2" fill="none" stroke="#6f6f6f" stroke-width="1.1"/><path d="M9.2 3.2L12.3 0.8V7.2L9.2 4.8Z" fill="none" stroke="#6f6f6f" stroke-width="1"/></svg></div>
<div class="a row" style="top:312.25px"><div class="a av ini" style="background:#23a55a">E</div><div class="a nm">Elizabeth</div><svg class="a" style="left:191.5px;top:-6px" width="13" height="12" viewBox="0 0 13 12"><rect x="4.4" y="0.6" width="3.2" height="6" rx="1.6" fill="none" stroke="#e07a86" stroke-width="1"/><path d="M2.8 5C2.8 7.4 4.2 8.2 6 8.2S9.2 7.4 9.2 5" fill="none" stroke="#e07a86" stroke-width="1"/><path d="M6 8.2V10.4M4.4 10.8H7.6" stroke="#e07a86" stroke-width="1"/><path d="M0.6 11.4L11.8 0.4" stroke="#c0606a" stroke-width="1.1"/></svg><svg class="a" style="left:209.5px;top:-6px" width="13" height="12" viewBox="0 0 13 12"><rect x="0.6" y="2.2" width="8.4" height="7" rx="1" fill="none" stroke="#c8606a" stroke-width="1.1"/><path d="M9 5L12.3 2.8V9L9 6.8Z" fill="none" stroke="#c8606a" stroke-width="1"/><path d="M0.4 11.6L11.8 0.4" stroke="#d0707a" stroke-width="1.1"/></svg></div>
<div class="a row" style="top:343.00px"><svg class="a av" width="19" height="19" viewBox="0 0 19 19"><defs><clipPath id="c8"><rect width="19" height="19" rx="4"/></clipPath></defs><g clip-path="url(#c8)"><rect width="19" height="19" fill="#909090"/><rect x="0" y="0" width="6" height="19" fill="#484848"/><path d="M7 3L14 2L16 19H7Z" fill="#e0e0e0"/><path d="M10 4L12 19" stroke="#202020" stroke-width="1.5"/><rect x="15" y="0" width="4" height="19" fill="#303030"/></g></svg><div class="a nm">Lena Kurashevich</div><svg class="a" style="left:191.5px;top:-6px" width="13" height="12" viewBox="0 0 13 12"><rect x="4.4" y="0.6" width="3.2" height="6" rx="1.6" fill="none" stroke="#e07a86" stroke-width="1"/><path d="M2.8 5C2.8 7.4 4.2 8.2 6 8.2S9.2 7.4 9.2 5" fill="none" stroke="#e07a86" stroke-width="1"/><path d="M6 8.2V10.4M4.4 10.8H7.6" stroke="#e07a86" stroke-width="1"/><path d="M0.6 11.4L11.8 0.4" stroke="#c0606a" stroke-width="1.1"/></svg><svg class="a" style="left:209.5px;top:-6px" width="13" height="12" viewBox="0 0 13 12"><rect x="0.6" y="2.2" width="8.4" height="7" rx="1" fill="none" stroke="#c8606a" stroke-width="1.1"/><path d="M9 5L12.3 2.8V9L9 6.8Z" fill="none" stroke="#c8606a" stroke-width="1"/><path d="M0.4 11.6L11.8 0.4" stroke="#d0707a" stroke-width="1.1"/></svg></div>
<div class="a row" style="top:373.75px"><div class="a av ini" style="background:#e0670f">NL</div><div class="a nm">Nadzieja Lewicka</div><svg class="a" style="left:191.5px;top:-6px" width="13" height="12" viewBox="0 0 13 12"><rect x="4.4" y="0.6" width="3.2" height="6" rx="1.6" fill="none" stroke="#e07a86" stroke-width="1"/><path d="M2.8 5C2.8 7.4 4.2 8.2 6 8.2S9.2 7.4 9.2 5" fill="none" stroke="#e07a86" stroke-width="1"/><path d="M6 8.2V10.4M4.4 10.8H7.6" stroke="#e07a86" stroke-width="1"/><path d="M0.6 11.4L11.8 0.4" stroke="#c0606a" stroke-width="1.1"/></svg><svg class="a" style="left:209.5px;top:-6px" width="13" height="12" viewBox="0 0 13 12"><rect x="0.6" y="2.2" width="8.4" height="7" rx="1" fill="none" stroke="#c8606a" stroke-width="1.1"/><path d="M9 5L12.3 2.8V9L9 6.8Z" fill="none" stroke="#c8606a" stroke-width="1"/><path d="M0.4 11.6L11.8 0.4" stroke="#d0707a" stroke-width="1.1"/></svg></div>
<div class="a row" style="top:404.50px"><svg class="a av" width="19" height="19" viewBox="0 0 19 19"><defs><clipPath id="c10"><rect width="19" height="19" rx="4"/></clipPath></defs><g clip-path="url(#c10)"><rect width="19" height="19" fill="#d8b8a8"/><ellipse cx="10" cy="10" rx="6" ry="7" fill="#e8d0c8"/><path d="M2 4C4 0 14 0 17 4L15 7C12 4 8 4 4 7Z" fill="#c0a890"/><ellipse cx="10" cy="13" rx="2" ry="1" fill="#c08080"/></g></svg><div class="a nm">Taisiia Peringa</div><svg class="a" style="left:191.5px;top:-6px" width="13" height="12" viewBox="0 0 13 12"><rect x="4.4" y="0.6" width="3.2" height="6" rx="1.6" fill="none" stroke="#e07a86" stroke-width="1"/><path d="M2.8 5C2.8 7.4 4.2 8.2 6 8.2S9.2 7.4 9.2 5" fill="none" stroke="#e07a86" stroke-width="1"/><path d="M6 8.2V10.4M4.4 10.8H7.6" stroke="#e07a86" stroke-width="1"/><path d="M0.6 11.4L11.8 0.4" stroke="#c0606a" stroke-width="1.1"/></svg><svg class="a" style="left:209.5px;top:-6px" width="13" height="12" viewBox="0 0 13 12"><rect x="0.6" y="2.2" width="8.4" height="7" rx="1" fill="none" stroke="#c8606a" stroke-width="1.1"/><path d="M9 5L12.3 2.8V9L9 6.8Z" fill="none" stroke="#c8606a" stroke-width="1"/><path d="M0.4 11.6L11.8 0.4" stroke="#d0707a" stroke-width="1.1"/></svg></div>
<div class="a row" style="top:435.25px"><div class="a av ini" style="background:#2f4a68">W</div><div class="a nm">wika</div><svg class="a" style="left:191.5px;top:-6px" width="13" height="12" viewBox="0 0 13 12"><rect x="4.4" y="0.6" width="3.2" height="6" rx="1.6" fill="none" stroke="#e07a86" stroke-width="1"/><path d="M2.8 5C2.8 7.4 4.2 8.2 6 8.2S9.2 7.4 9.2 5" fill="none" stroke="#e07a86" stroke-width="1"/><path d="M6 8.2V10.4M4.4 10.8H7.6" stroke="#e07a86" stroke-width="1"/><path d="M0.6 11.4L11.8 0.4" stroke="#c0606a" stroke-width="1.1"/></svg><svg class="a" style="left:209.5px;top:-6px" width="13" height="12" viewBox="0 0 13 12"><rect x="0.6" y="2.2" width="8.4" height="7" rx="1" fill="none" stroke="#c8606a" stroke-width="1.1"/><path d="M9 5L12.3 2.8V9L9 6.8Z" fill="none" stroke="#c8606a" stroke-width="1"/><path d="M0.4 11.6L11.8 0.4" stroke="#d0707a" stroke-width="1.1"/></svg></div>
<div class="a row" style="top:466.00px"><svg class="a av" width="19" height="19" viewBox="0 0 19 19"><defs><clipPath id="c12"><rect width="19" height="19" rx="4"/></clipPath></defs><g clip-path="url(#c12)"><rect width="19" height="19" fill="#c8ccd0"/><rect y="9" width="19" height="10" fill="#7a7058"/><path d="M0 12L6 9L12 11L19 8V19H0Z" fill="#4a4838"/><ellipse cx="9" cy="11" rx="3" ry="3" fill="#383028"/></g></svg><div class="a nm">Władysława & Daria Iszczuk</div><svg class="a" style="left:191.5px;top:-6px" width="13" height="12" viewBox="0 0 13 12"><rect x="4.4" y="0.6" width="3.2" height="6" rx="1.6" fill="none" stroke="#e07a86" stroke-width="1"/><path d="M2.8 5C2.8 7.4 4.2 8.2 6 8.2S9.2 7.4 9.2 5" fill="none" stroke="#e07a86" stroke-width="1"/><path d="M6 8.2V10.4M4.4 10.8H7.6" stroke="#e07a86" stroke-width="1"/><path d="M0.6 11.4L11.8 0.4" stroke="#c0606a" stroke-width="1.1"/></svg><svg class="a" style="left:209.5px;top:-6px" width="13" height="12" viewBox="0 0 13 12"><rect x="0.6" y="2.2" width="8.4" height="7" rx="1" fill="none" stroke="#c8606a" stroke-width="1.1"/><path d="M9 5L12.3 2.8V9L9 6.8Z" fill="none" stroke="#c8606a" stroke-width="1"/><path d="M0.4 11.6L11.8 0.4" stroke="#d0707a" stroke-width="1.1"/></svg></div>
<div class="a row" style="top:496.75px"><div class="a av ini" style="background:#2f4a68">a</div><div class="a nm">аврора остапчук</div><svg class="a" style="left:191.5px;top:-6px" width="13" height="12" viewBox="0 0 13 12"><rect x="4.4" y="0.6" width="3.2" height="6" rx="1.6" fill="none" stroke="#e07a86" stroke-width="1"/><path d="M2.8 5C2.8 7.4 4.2 8.2 6 8.2S9.2 7.4 9.2 5" fill="none" stroke="#e07a86" stroke-width="1"/><path d="M6 8.2V10.4M4.4 10.8H7.6" stroke="#e07a86" stroke-width="1"/><path d="M0.6 11.4L11.8 0.4" stroke="#c0606a" stroke-width="1.1"/></svg><svg class="a" style="left:209.5px;top:-6px" width="13" height="12" viewBox="0 0 13 12"><rect x="0.6" y="2.2" width="8.4" height="7" rx="1" fill="none" stroke="#c8606a" stroke-width="1.1"/><path d="M9 5L12.3 2.8V9L9 6.8Z" fill="none" stroke="#c8606a" stroke-width="1"/><path d="M0.4 11.6L11.8 0.4" stroke="#d0707a" stroke-width="1.1"/></svg></div>
<div id="task" class="a"></div>
<div class="a" style="left:0;top:546px;width:1024px;height:1px;background:#d6e0ea"></div>
<div class="a" style="left:0;top:547px;width:1024px;height:1px;background:#b8c8da;opacity:.6"></div>
<!-- start orb -->
<svg class="a" style="left:6px;top:547px" width="29" height="29" viewBox="0 0 29 29">
<defs><radialGradient id="orb" cx="0.5" cy="0.65" r="0.6"><stop offset="0" stop-color="#5ac8f0"/><stop offset="0.6" stop-color="#1a6ab0"/><stop offset="1" stop-color="#0a3a70"/></radialGradient>
<linearGradient id="orbh" x1="0" y1="0" x2="0" y2="1"><stop offset="0" stop-color="#fff" stop-opacity=".7"/><stop offset="1" stop-color="#fff" stop-opacity="0"/></linearGradient></defs>
<circle cx="14.5" cy="14.5" r="13.2" fill="url(#orb)" stroke="#3a5a80" stroke-width="0.8"/>
<ellipse cx="14.5" cy="9" rx="10" ry="7" fill="url(#orbh)"/>
<path d="M8.5 9.5L13.5 8.8V13.8L8 14.2Z" fill="#f06a2a"/>
<path d="M14.6 8.6L20.5 8V13.6L14.6 13.8Z" fill="#8ac83a"/>
<path d="M8 15.2L13.5 15V20L8.6 19.6Z" fill="#3ab0f0"/>
<path d="M14.6 15L20.5 15.2V20.8L14.6 20.2Z" fill="#f8c020"/>
</svg>
<!-- IE -->
<svg class="a" style="left:54px;top:548px" width="26" height="25" viewBox="0 0 26 25">
<path d="M21 15H9C9.5 18 11.5 19.5 14 19.5C16 19.5 17.5 18.6 18.5 17.2H21.2C19.8 20.5 17 22.4 13.8 22.4C9 22.4 6 18.6 6 13.8S9.2 5.2 14 5.2C18.5 5.2 21.4 8.6 21.4 13.5ZM9.2 12.4H18.3C18 9.8 16.3 8 13.8 8S9.6 9.8 9.2 12.4Z" fill="#29a8e8"/>
<path d="M3 21C0 17 5 8 12 4C18 1 23 0 24.5 2C25.5 4 23 8 21 10C22 7 23 4 21.5 3.5C19 3 12 6 8 11C4 16 3 19 4.5 20.5C6 21.5 9 20 11 19C8 22 4.5 23 3 21Z" fill="#f2c21a"/>
</svg>
<div class="a tbtn" style="left:91px"></div>
<div class="a tbtn" style="left:137px"></div>
<div class="a" style="left:179px;top:548px;width:1px;height:27px;background:#7f90a4;opacity:.6"></div>
<div class="a" style="left:180px;top:548px;width:1px;height:27px;background:#dde6ef;opacity:.6"></div>
<div class="a tbtn" style="left:184px"></div>
<div class="a tbtn" style="left:231px"></div>
<div class="a tbtn" style="left:277px"></div>
<div class="a tbtn" style="left:323.5px"></div>
<div class="a tbtn" style="left:369.5px"></div>
<div class="a tbtn" style="left:416px"></div>
<div class="a tbtn" style="left:462px"></div>
<!-- icons -->
<svg class="a" style="left:101px;top:550px" width="24" height="24" viewBox="0 0 24 24"><rect x="3" y="2" width="18" height="19" rx="1" fill="#d8e4f0" stroke="#6a8ab0" stroke-width="0.8"/><circle cx="11.5" cy="12" r="6.5" fill="#f07a20"/><path d="M9.5 8.5L15 12L9.5 15.5Z" fill="#fff"/></svg>
<svg class="a" style="left:144px;top:549px" width="26" height="24" viewBox="0 0 26 24"><path d="M2 4H10L12 6H24V20H2Z" fill="#e8c850"/><rect x="5" y="3" width="15" height="6" fill="#f8f8f0"/><path d="M3 9H24L23 21H3Z" fill="#f8e080"/><rect x="8" y="14" width="10" height="5" fill="#6ab0e0"/><rect x="4" y="18" width="18" height="3" fill="#a8d0f0"/></svg>
<svg class="a" style="left:193px;top:549px" width="25" height="25" viewBox="0 0 25 25"><defs><linearGradient id="edg" x1="0" y1="0" x2="1" y2="1"><stop offset="0" stop-color="#3ad08a"/><stop offset="0.5" stop-color="#1a9ad8"/><stop offset="1" stop-color="#0a5aa8"/></linearGradient></defs><path d="M12.5 2C19 2 23 6.5 23 11.5C23 15 20.5 16.5 17.5 16.5C15 16.5 13 15.5 13 14C13 13 14 12.5 14 11.5C14 9 11 7.5 8.5 8.5C4.5 10 3.5 15 6 19C8 22 12 23.5 15.5 22.5C10 25 3 22 2 15C1 8 6 2 12.5 2Z" fill="url(#edg)"/></svg>
<svg class="a" style="left:240px;top:549px" width="25" height="25" viewBox="0 0 24 24"><circle cx="12" cy="12" r="11" fill="#db4437"/><path d="M12 12L2.5 6.5A11 11 0 0 0 12 23L17 14Z" fill="#0f9d58"/><path d="M12 12L17 14L12 23A11 11 0 0 0 21.5 6.5H12Z" fill="#f4c20d"/><path d="M12 1A11 11 0 0 1 21.5 6.5H12Z" fill="#db4437"/><circle cx="12" cy="12" r="5" fill="#fff"/><circle cx="12" cy="12" r="4" fill="#4285f4"/></svg>
<svg class="a" style="left:285px;top:549px" width="26" height="25" viewBox="0 0 26 25"><path d="M3 14C2 7 10 4 15 6C20 8 18 12 15 12C13 12 13 15 15 16C17 17 16 21 11 21C6 21 3.5 18 3 14Z" fill="#f0eee8" stroke="#a09880" stroke-width="0.6"/><circle cx="7" cy="12" r="1.8" fill="#e03030"/><circle cx="9" cy="8.5" r="1.6" fill="#30a030"/><circle cx="12.5" cy="7.5" r="1.5" fill="#f0c020"/><circle cx="8" cy="16" r="1.6" fill="#3060e0"/><path d="M11 23L22 3L24 4L14 23Z" fill="#c89040"/><path d="M20.5 2L23 0.5L25 2.5L23.5 5Z" fill="#e0b060"/></svg>
<svg class="a" style="left:333px;top:549px" width="24" height="25" viewBox="0 0 24 25"><rect x="3" y="2" width="18" height="21" fill="#f0f4f8" stroke="#8aa0b8" stroke-width="0.8"/><rect x="3" y="2" width="18" height="4" fill="#6a9ad0"/><path d="M8 19L12 8L16 19M9.5 15H14.5" fill="none" stroke="#f0a030" stroke-width="2"/></svg>
<svg class="a" style="left:378px;top:549px" width="27" height="25" viewBox="0 0 27 25"><rect x="1" y="2" width="24" height="16" fill="#3a8ad0" stroke="#2a5a90" stroke-width="0.8"/><rect x="3" y="4" width="20" height="12" fill="#5aaae8"/><circle cx="9" cy="10" r="3.5" fill="none" stroke="#f0c040" stroke-width="1.4"/><rect x="15" y="6" width="6" height="3" fill="#fff" opacity=".8"/><rect x="15" y="11" width="6" height="3" fill="#fff" opacity=".8"/><ellipse cx="14" cy="21" rx="5" ry="3" fill="#e0e0e0" stroke="#909090" stroke-width="0.5"/></svg>
<svg class="a" style="left:424px;top:549px" width="25" height="25" viewBox="0 0 25 25"><rect x="1" y="1" width="23" height="23" rx="7" fill="#4a8cf0"/><rect x="6" y="8.5" width="9" height="8" rx="1.5" fill="#fff"/><path d="M15.5 11.5L19.5 9V16L15.5 13.5Z" fill="#fff"/></svg>
<svg class="a" style="left:471px;top:548px" width="26" height="26" viewBox="0 0 26 26"><path d="M5 4L9 6L13 2L15 7L21 5L19 10L25 12L20 15L23 20L17 19L15 24L11 20L6 23L7 17L1 15L6 12L3 8Z" fill="#b01818"/><circle cx="10" cy="7" r="2.5" fill="#d04040"/><text x="10" y="16" font-family="Liberation Sans" font-size="6" font-weight="bold" fill="#f8e8a0">64</text></svg>
<!-- tray -->
<div class="a" style="left:847.5px;top:554.5px;font-size:8.8px;color:#f4f6fa;line-height:11px;letter-spacing:-0.3px">PL</div>
<svg class="a" style="left:863px;top:557px" width="12" height="9" viewBox="0 0 12 9"><rect x="0.5" y="1" width="11" height="7" fill="#c8ccd4" stroke="#707880" stroke-width="0.6"/><path d="M2 4H10M2 6H10" stroke="#606870" stroke-width="0.6"/></svg>
<svg class="a" style="left:884.5px;top:559.5px" width="7" height="4" viewBox="0 0 7 4"><path d="M0.5 3.8L3.5 0.5L6.5 3.8Z" fill="#f4f6fa"/></svg>
<svg class="a" style="left:898.5px;top:555px" width="13" height="13" viewBox="0 0 13 13"><rect x="1" y="2" width="8" height="10" fill="#f0f0f0" stroke="#404850" stroke-width="1"/><rect x="5" y="0.5" width="6" height="8" fill="#f8f8f8" stroke="#404850" stroke-width="1"/><path d="M7 3L9 5" stroke="#404850" stroke-width="1"/></svg>
<svg class="a" style="left:916.5px;top:556px" width="14" height="11" viewBox="0 0 14 11"><path d="M1 3.5H3.5L6.5 1V10L3.5 7.5H1Z" fill="#f4f4f4" stroke="#505860" stroke-width="0.6"/><path d="M8.5 3.5C9.3 4.5 9.3 6.5 8.5 7.5M10.5 2C12 3.5 12 7.5 10.5 9" fill="none" stroke="#f4f4f4" stroke-width="1"/></svg>
<svg class="a" style="left:935px;top:556px" width="13" height="11" viewBox="0 0 13 11"><rect x="0.5" y="8.5" width="2" height="2" fill="#f4f4f4"/><rect x="3.5" y="7" width="2" height="3.5" fill="#f4f4f4"/><rect x="6.5" y="5" width="2" height="5.5" fill="#f4f4f4"/><rect x="9.5" y="1" width="2.2" height="9.5" fill="#f4f4f4"/></svg>
<div class="a" style="left:952px;top:550px;width:62px;text-align:center;font-size:9.5px;color:#f4f6fa;line-height:11px;letter-spacing:-0.45px">11:14<br><span style="position:relative;top:2px;letter-spacing:-0.5px">2021-10-31</span></div>
<div class="a" style="left:1014.5px;top:547px;width:9.5px;height:29px;background:linear-gradient(90deg,#6a7f98,#8aa0b8 40%,#7a90a8);border-left:1px solid #506078"></div>

</body></html>
